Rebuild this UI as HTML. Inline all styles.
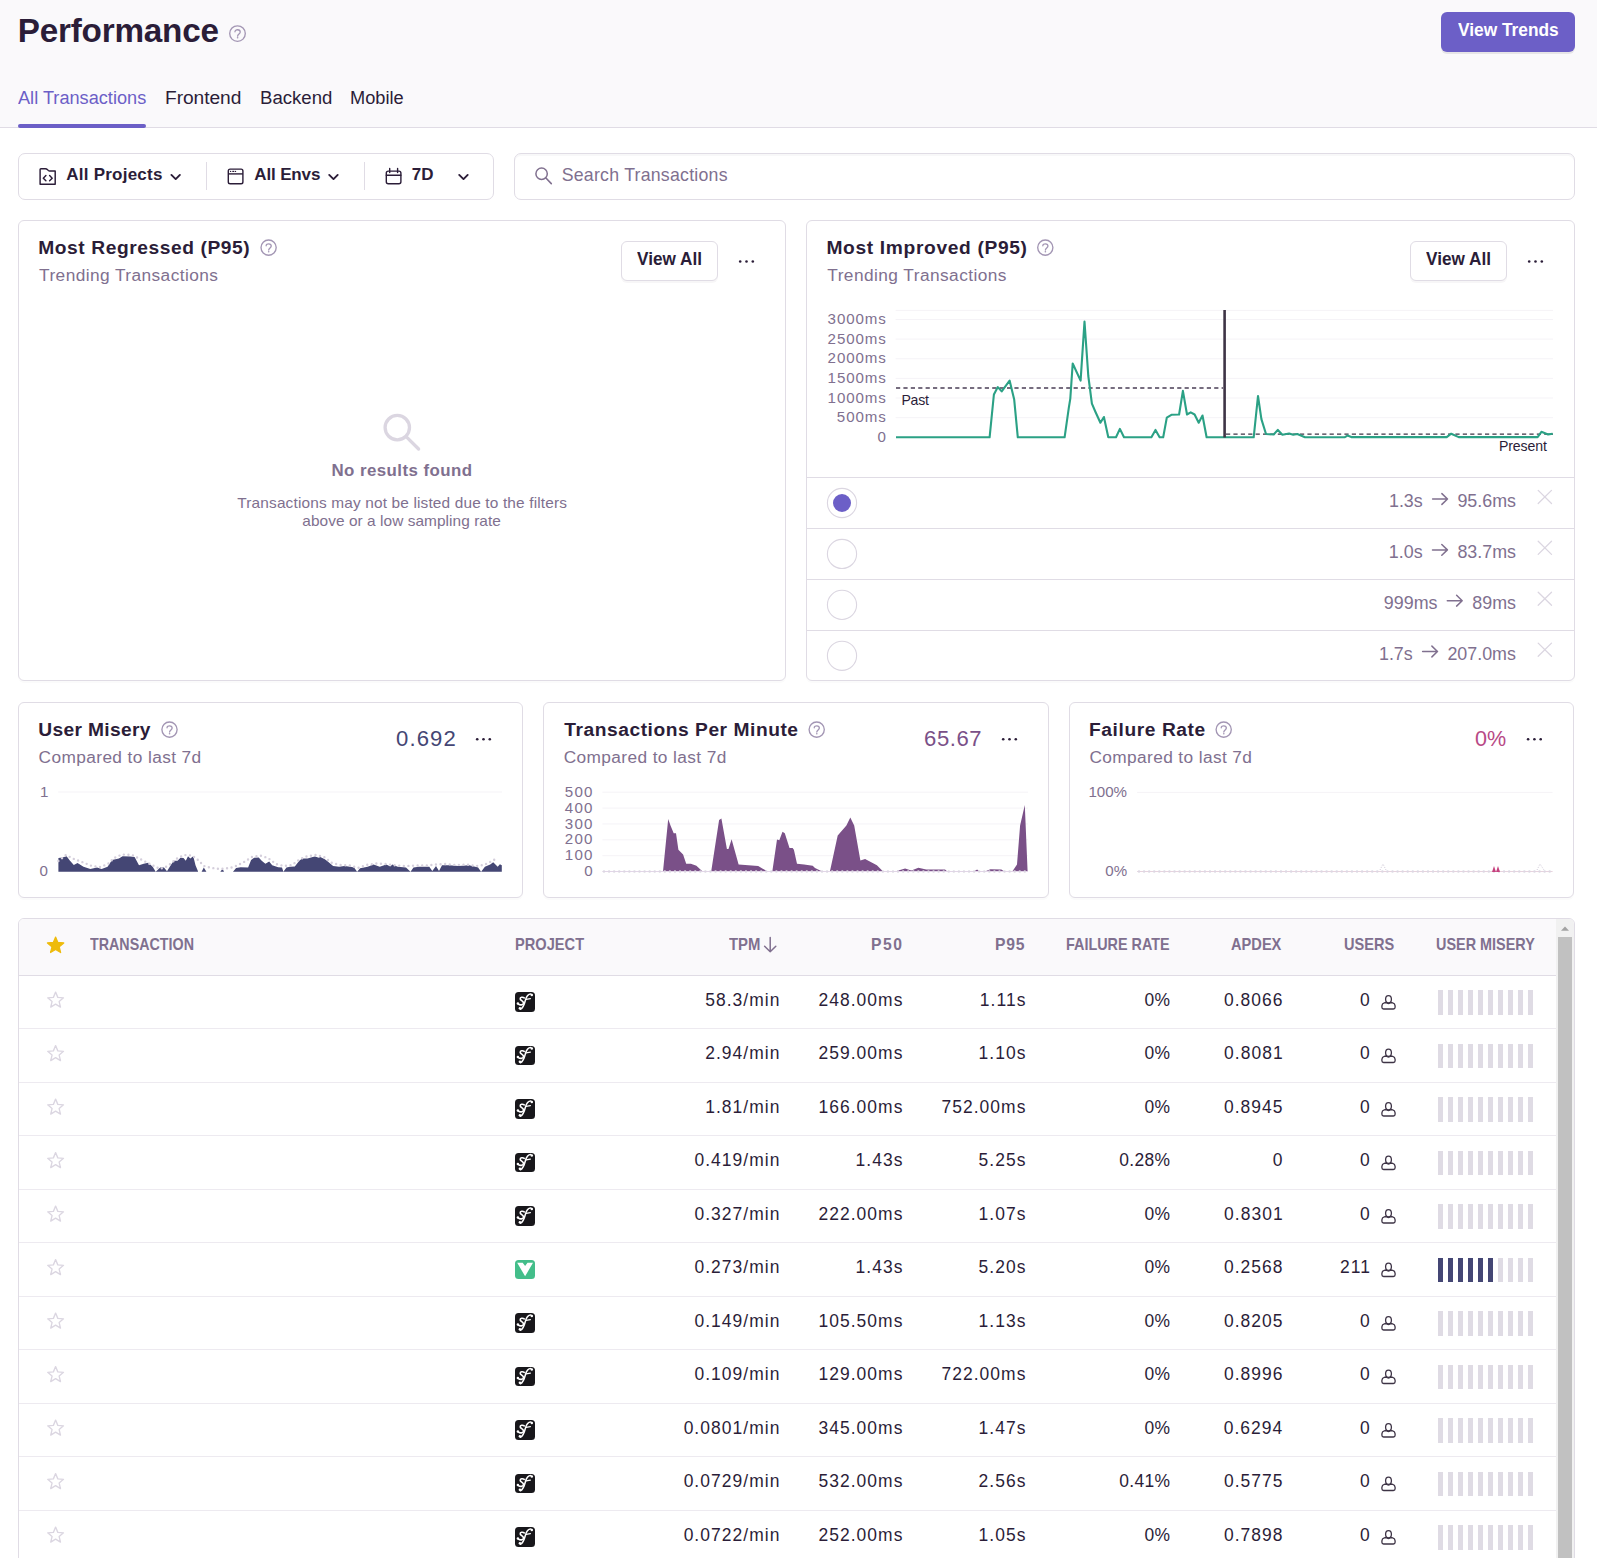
<!DOCTYPE html>
<html><head><meta charset="utf-8"><title>Performance</title>
<style>
html,body{margin:0;padding:0;}
body{background:#fff;font-family:"Liberation Sans",sans-serif;}
.page{position:relative;width:1597px;height:1558px;overflow:hidden;background:#fff;}
.b{position:absolute;}
.t{position:absolute;white-space:nowrap;}
svg{position:absolute;left:0;top:0;}
</style></head><body><div class="page">
<div class="b" style="left:0px;top:0px;width:1597px;height:128px;background:#FAF9FB;border-bottom:1px solid #E0DCE5;box-sizing:border-box;"></div>
<div class="b" style="left:1441px;top:12px;width:134px;height:40px;background:#6C5FC7;border-radius:6px;box-shadow:0 2px 0 rgba(0,0,0,0.08);"></div>
<div class="b" style="left:18px;top:124px;width:128px;height:4px;background:#6C5FC7;border-radius:2px;"></div>
<div class="b" style="left:18px;top:153px;width:476px;height:47px;border:1px solid #E0DCE5;border-radius:7px;box-sizing:border-box;background:#fff;"></div>
<div class="b" style="left:514px;top:153px;width:1061px;height:47px;border:1px solid #E0DCE5;border-radius:7px;box-sizing:border-box;background:#fff;box-shadow:inset 0 2px 0 rgba(43,29,56,0.03);"></div>
<div class="b" style="left:206px;top:162px;width:1px;height:28px;background:#E0DCE5;"></div>
<div class="b" style="left:364px;top:162px;width:1px;height:28px;background:#E0DCE5;"></div>
<div class="b" style="left:18px;top:220px;width:768px;height:461px;border:1px solid #E0DCE5;border-radius:6px;box-sizing:border-box;background:#fff;box-shadow:0 2px 0 rgba(43,29,56,0.02);"></div>
<div class="b" style="left:806px;top:220px;width:769px;height:461px;border:1px solid #E0DCE5;border-radius:6px;box-sizing:border-box;background:#fff;box-shadow:0 2px 0 rgba(43,29,56,0.02);"></div>
<div class="b" style="left:621px;top:241px;width:97px;height:40px;border:1px solid #E0DCE5;border-radius:6px;box-sizing:border-box;background:#fff;box-shadow:0 2px 0 rgba(43,29,56,0.04);"></div>
<div class="b" style="left:1410px;top:241px;width:97px;height:40px;border:1px solid #E0DCE5;border-radius:6px;box-sizing:border-box;background:#fff;box-shadow:0 2px 0 rgba(43,29,56,0.04);"></div>
<div class="b" style="left:807px;top:477px;width:767px;height:1px;background:#E0DCE5;"></div>
<div class="b" style="left:807px;top:528px;width:767px;height:1px;background:#E0DCE5;"></div>
<div class="b" style="left:807px;top:579px;width:767px;height:1px;background:#E0DCE5;"></div>
<div class="b" style="left:807px;top:630px;width:767px;height:1px;background:#E0DCE5;"></div>
<div class="b" style="left:18px;top:702px;width:505px;height:196px;border:1px solid #E0DCE5;border-radius:6px;box-sizing:border-box;background:#fff;box-shadow:0 2px 0 rgba(43,29,56,0.02);"></div>
<div class="b" style="left:543px;top:702px;width:506px;height:196px;border:1px solid #E0DCE5;border-radius:6px;box-sizing:border-box;background:#fff;box-shadow:0 2px 0 rgba(43,29,56,0.02);"></div>
<div class="b" style="left:1069px;top:702px;width:505px;height:196px;border:1px solid #E0DCE5;border-radius:6px;box-sizing:border-box;background:#fff;box-shadow:0 2px 0 rgba(43,29,56,0.02);"></div>
<div class="b" style="left:18px;top:918px;width:1557px;height:682px;border:1px solid #E0DCE5;border-radius:6px;box-sizing:border-box;background:#fff;overflow:hidden;"></div>
<div class="b" style="left:19px;top:919px;width:1537px;height:56px;background:#FAF9FB;border-top-left-radius:5px;"></div>
<div class="b" style="left:19px;top:975px;width:1537px;height:1px;background:#E0DCE5;"></div>
<div class="b" style="left:1556px;top:919px;width:18px;height:639px;background:#F1F1F1;border-top-right-radius:5px;"></div>
<div class="b" style="left:1558px;top:937px;width:14px;height:621px;background:#C1C1C1;"></div>
<div class="b" style="left:515.2px;top:992.0px;width:19.59999999999991px;height:19.600000000000023px;background:#18171B;border-radius:3.5px;"></div>
<div class="b" style="left:1438.0px;top:990.1px;width:5.0px;height:24.799999999999955px;background:#DFDBE4;"></div>
<div class="b" style="left:1448.0px;top:990.1px;width:5.0px;height:24.799999999999955px;background:#DFDBE4;"></div>
<div class="b" style="left:1458.0px;top:990.1px;width:5.0px;height:24.799999999999955px;background:#DFDBE4;"></div>
<div class="b" style="left:1468.0px;top:990.1px;width:5.0px;height:24.799999999999955px;background:#DFDBE4;"></div>
<div class="b" style="left:1478.0px;top:990.1px;width:5.0px;height:24.799999999999955px;background:#DFDBE4;"></div>
<div class="b" style="left:1488.0px;top:990.1px;width:5.0px;height:24.799999999999955px;background:#DFDBE4;"></div>
<div class="b" style="left:1498.0px;top:990.1px;width:5.0px;height:24.799999999999955px;background:#DFDBE4;"></div>
<div class="b" style="left:1508.0px;top:990.1px;width:5.0px;height:24.799999999999955px;background:#DFDBE4;"></div>
<div class="b" style="left:1518.0px;top:990.1px;width:5.0px;height:24.799999999999955px;background:#DFDBE4;"></div>
<div class="b" style="left:1528.0px;top:990.1px;width:5.0px;height:24.799999999999955px;background:#DFDBE4;"></div>
<div class="b" style="left:19px;top:1028px;width:1537px;height:1px;background:#EDEAF0;"></div>
<div class="b" style="left:515.2px;top:1045.5px;width:19.59999999999991px;height:19.600000000000136px;background:#18171B;border-radius:3.5px;"></div>
<div class="b" style="left:1438.0px;top:1043.6000000000001px;width:5.0px;height:24.799999999999955px;background:#DFDBE4;"></div>
<div class="b" style="left:1448.0px;top:1043.6000000000001px;width:5.0px;height:24.799999999999955px;background:#DFDBE4;"></div>
<div class="b" style="left:1458.0px;top:1043.6000000000001px;width:5.0px;height:24.799999999999955px;background:#DFDBE4;"></div>
<div class="b" style="left:1468.0px;top:1043.6000000000001px;width:5.0px;height:24.799999999999955px;background:#DFDBE4;"></div>
<div class="b" style="left:1478.0px;top:1043.6000000000001px;width:5.0px;height:24.799999999999955px;background:#DFDBE4;"></div>
<div class="b" style="left:1488.0px;top:1043.6000000000001px;width:5.0px;height:24.799999999999955px;background:#DFDBE4;"></div>
<div class="b" style="left:1498.0px;top:1043.6000000000001px;width:5.0px;height:24.799999999999955px;background:#DFDBE4;"></div>
<div class="b" style="left:1508.0px;top:1043.6000000000001px;width:5.0px;height:24.799999999999955px;background:#DFDBE4;"></div>
<div class="b" style="left:1518.0px;top:1043.6000000000001px;width:5.0px;height:24.799999999999955px;background:#DFDBE4;"></div>
<div class="b" style="left:1528.0px;top:1043.6000000000001px;width:5.0px;height:24.799999999999955px;background:#DFDBE4;"></div>
<div class="b" style="left:19px;top:1082px;width:1537px;height:1px;background:#EDEAF0;"></div>
<div class="b" style="left:515.2px;top:1099.0px;width:19.59999999999991px;height:19.600000000000136px;background:#18171B;border-radius:3.5px;"></div>
<div class="b" style="left:1438.0px;top:1097.1000000000001px;width:5.0px;height:24.799999999999955px;background:#DFDBE4;"></div>
<div class="b" style="left:1448.0px;top:1097.1000000000001px;width:5.0px;height:24.799999999999955px;background:#DFDBE4;"></div>
<div class="b" style="left:1458.0px;top:1097.1000000000001px;width:5.0px;height:24.799999999999955px;background:#DFDBE4;"></div>
<div class="b" style="left:1468.0px;top:1097.1000000000001px;width:5.0px;height:24.799999999999955px;background:#DFDBE4;"></div>
<div class="b" style="left:1478.0px;top:1097.1000000000001px;width:5.0px;height:24.799999999999955px;background:#DFDBE4;"></div>
<div class="b" style="left:1488.0px;top:1097.1000000000001px;width:5.0px;height:24.799999999999955px;background:#DFDBE4;"></div>
<div class="b" style="left:1498.0px;top:1097.1000000000001px;width:5.0px;height:24.799999999999955px;background:#DFDBE4;"></div>
<div class="b" style="left:1508.0px;top:1097.1000000000001px;width:5.0px;height:24.799999999999955px;background:#DFDBE4;"></div>
<div class="b" style="left:1518.0px;top:1097.1000000000001px;width:5.0px;height:24.799999999999955px;background:#DFDBE4;"></div>
<div class="b" style="left:1528.0px;top:1097.1000000000001px;width:5.0px;height:24.799999999999955px;background:#DFDBE4;"></div>
<div class="b" style="left:19px;top:1135px;width:1537px;height:1px;background:#EDEAF0;"></div>
<div class="b" style="left:515.2px;top:1152.5px;width:19.59999999999991px;height:19.600000000000136px;background:#18171B;border-radius:3.5px;"></div>
<div class="b" style="left:1438.0px;top:1150.6000000000001px;width:5.0px;height:24.799999999999955px;background:#DFDBE4;"></div>
<div class="b" style="left:1448.0px;top:1150.6000000000001px;width:5.0px;height:24.799999999999955px;background:#DFDBE4;"></div>
<div class="b" style="left:1458.0px;top:1150.6000000000001px;width:5.0px;height:24.799999999999955px;background:#DFDBE4;"></div>
<div class="b" style="left:1468.0px;top:1150.6000000000001px;width:5.0px;height:24.799999999999955px;background:#DFDBE4;"></div>
<div class="b" style="left:1478.0px;top:1150.6000000000001px;width:5.0px;height:24.799999999999955px;background:#DFDBE4;"></div>
<div class="b" style="left:1488.0px;top:1150.6000000000001px;width:5.0px;height:24.799999999999955px;background:#DFDBE4;"></div>
<div class="b" style="left:1498.0px;top:1150.6000000000001px;width:5.0px;height:24.799999999999955px;background:#DFDBE4;"></div>
<div class="b" style="left:1508.0px;top:1150.6000000000001px;width:5.0px;height:24.799999999999955px;background:#DFDBE4;"></div>
<div class="b" style="left:1518.0px;top:1150.6000000000001px;width:5.0px;height:24.799999999999955px;background:#DFDBE4;"></div>
<div class="b" style="left:1528.0px;top:1150.6000000000001px;width:5.0px;height:24.799999999999955px;background:#DFDBE4;"></div>
<div class="b" style="left:19px;top:1189px;width:1537px;height:1px;background:#EDEAF0;"></div>
<div class="b" style="left:515.2px;top:1206.0px;width:19.59999999999991px;height:19.600000000000136px;background:#18171B;border-radius:3.5px;"></div>
<div class="b" style="left:1438.0px;top:1204.1000000000001px;width:5.0px;height:24.799999999999955px;background:#DFDBE4;"></div>
<div class="b" style="left:1448.0px;top:1204.1000000000001px;width:5.0px;height:24.799999999999955px;background:#DFDBE4;"></div>
<div class="b" style="left:1458.0px;top:1204.1000000000001px;width:5.0px;height:24.799999999999955px;background:#DFDBE4;"></div>
<div class="b" style="left:1468.0px;top:1204.1000000000001px;width:5.0px;height:24.799999999999955px;background:#DFDBE4;"></div>
<div class="b" style="left:1478.0px;top:1204.1000000000001px;width:5.0px;height:24.799999999999955px;background:#DFDBE4;"></div>
<div class="b" style="left:1488.0px;top:1204.1000000000001px;width:5.0px;height:24.799999999999955px;background:#DFDBE4;"></div>
<div class="b" style="left:1498.0px;top:1204.1000000000001px;width:5.0px;height:24.799999999999955px;background:#DFDBE4;"></div>
<div class="b" style="left:1508.0px;top:1204.1000000000001px;width:5.0px;height:24.799999999999955px;background:#DFDBE4;"></div>
<div class="b" style="left:1518.0px;top:1204.1000000000001px;width:5.0px;height:24.799999999999955px;background:#DFDBE4;"></div>
<div class="b" style="left:1528.0px;top:1204.1000000000001px;width:5.0px;height:24.799999999999955px;background:#DFDBE4;"></div>
<div class="b" style="left:19px;top:1242px;width:1537px;height:1px;background:#EDEAF0;"></div>
<div class="b" style="left:515.2px;top:1259.5px;width:19.699999999999932px;height:19.800000000000182px;background:#43BE8A;border-radius:3.5px;"></div>
<div class="b" style="left:1438.0px;top:1257.6000000000001px;width:5.0px;height:24.799999999999955px;background:#444674;"></div>
<div class="b" style="left:1448.0px;top:1257.6000000000001px;width:5.0px;height:24.799999999999955px;background:#444674;"></div>
<div class="b" style="left:1458.0px;top:1257.6000000000001px;width:5.0px;height:24.799999999999955px;background:#444674;"></div>
<div class="b" style="left:1468.0px;top:1257.6000000000001px;width:5.0px;height:24.799999999999955px;background:#444674;"></div>
<div class="b" style="left:1478.0px;top:1257.6000000000001px;width:5.0px;height:24.799999999999955px;background:#444674;"></div>
<div class="b" style="left:1488.0px;top:1257.6000000000001px;width:5.0px;height:24.799999999999955px;background:#444674;"></div>
<div class="b" style="left:1498.0px;top:1257.6000000000001px;width:5.0px;height:24.799999999999955px;background:#DFDBE4;"></div>
<div class="b" style="left:1508.0px;top:1257.6000000000001px;width:5.0px;height:24.799999999999955px;background:#DFDBE4;"></div>
<div class="b" style="left:1518.0px;top:1257.6000000000001px;width:5.0px;height:24.799999999999955px;background:#DFDBE4;"></div>
<div class="b" style="left:1528.0px;top:1257.6000000000001px;width:5.0px;height:24.799999999999955px;background:#DFDBE4;"></div>
<div class="b" style="left:19px;top:1296px;width:1537px;height:1px;background:#EDEAF0;"></div>
<div class="b" style="left:515.2px;top:1313.0px;width:19.59999999999991px;height:19.600000000000136px;background:#18171B;border-radius:3.5px;"></div>
<div class="b" style="left:1438.0px;top:1311.1000000000001px;width:5.0px;height:24.799999999999955px;background:#DFDBE4;"></div>
<div class="b" style="left:1448.0px;top:1311.1000000000001px;width:5.0px;height:24.799999999999955px;background:#DFDBE4;"></div>
<div class="b" style="left:1458.0px;top:1311.1000000000001px;width:5.0px;height:24.799999999999955px;background:#DFDBE4;"></div>
<div class="b" style="left:1468.0px;top:1311.1000000000001px;width:5.0px;height:24.799999999999955px;background:#DFDBE4;"></div>
<div class="b" style="left:1478.0px;top:1311.1000000000001px;width:5.0px;height:24.799999999999955px;background:#DFDBE4;"></div>
<div class="b" style="left:1488.0px;top:1311.1000000000001px;width:5.0px;height:24.799999999999955px;background:#DFDBE4;"></div>
<div class="b" style="left:1498.0px;top:1311.1000000000001px;width:5.0px;height:24.799999999999955px;background:#DFDBE4;"></div>
<div class="b" style="left:1508.0px;top:1311.1000000000001px;width:5.0px;height:24.799999999999955px;background:#DFDBE4;"></div>
<div class="b" style="left:1518.0px;top:1311.1000000000001px;width:5.0px;height:24.799999999999955px;background:#DFDBE4;"></div>
<div class="b" style="left:1528.0px;top:1311.1000000000001px;width:5.0px;height:24.799999999999955px;background:#DFDBE4;"></div>
<div class="b" style="left:19px;top:1349px;width:1537px;height:1px;background:#EDEAF0;"></div>
<div class="b" style="left:515.2px;top:1366.5px;width:19.59999999999991px;height:19.600000000000136px;background:#18171B;border-radius:3.5px;"></div>
<div class="b" style="left:1438.0px;top:1364.6000000000001px;width:5.0px;height:24.799999999999955px;background:#DFDBE4;"></div>
<div class="b" style="left:1448.0px;top:1364.6000000000001px;width:5.0px;height:24.799999999999955px;background:#DFDBE4;"></div>
<div class="b" style="left:1458.0px;top:1364.6000000000001px;width:5.0px;height:24.799999999999955px;background:#DFDBE4;"></div>
<div class="b" style="left:1468.0px;top:1364.6000000000001px;width:5.0px;height:24.799999999999955px;background:#DFDBE4;"></div>
<div class="b" style="left:1478.0px;top:1364.6000000000001px;width:5.0px;height:24.799999999999955px;background:#DFDBE4;"></div>
<div class="b" style="left:1488.0px;top:1364.6000000000001px;width:5.0px;height:24.799999999999955px;background:#DFDBE4;"></div>
<div class="b" style="left:1498.0px;top:1364.6000000000001px;width:5.0px;height:24.799999999999955px;background:#DFDBE4;"></div>
<div class="b" style="left:1508.0px;top:1364.6000000000001px;width:5.0px;height:24.799999999999955px;background:#DFDBE4;"></div>
<div class="b" style="left:1518.0px;top:1364.6000000000001px;width:5.0px;height:24.799999999999955px;background:#DFDBE4;"></div>
<div class="b" style="left:1528.0px;top:1364.6000000000001px;width:5.0px;height:24.799999999999955px;background:#DFDBE4;"></div>
<div class="b" style="left:19px;top:1403px;width:1537px;height:1px;background:#EDEAF0;"></div>
<div class="b" style="left:515.2px;top:1420.0px;width:19.59999999999991px;height:19.600000000000136px;background:#18171B;border-radius:3.5px;"></div>
<div class="b" style="left:1438.0px;top:1418.1000000000001px;width:5.0px;height:24.799999999999955px;background:#DFDBE4;"></div>
<div class="b" style="left:1448.0px;top:1418.1000000000001px;width:5.0px;height:24.799999999999955px;background:#DFDBE4;"></div>
<div class="b" style="left:1458.0px;top:1418.1000000000001px;width:5.0px;height:24.799999999999955px;background:#DFDBE4;"></div>
<div class="b" style="left:1468.0px;top:1418.1000000000001px;width:5.0px;height:24.799999999999955px;background:#DFDBE4;"></div>
<div class="b" style="left:1478.0px;top:1418.1000000000001px;width:5.0px;height:24.799999999999955px;background:#DFDBE4;"></div>
<div class="b" style="left:1488.0px;top:1418.1000000000001px;width:5.0px;height:24.799999999999955px;background:#DFDBE4;"></div>
<div class="b" style="left:1498.0px;top:1418.1000000000001px;width:5.0px;height:24.799999999999955px;background:#DFDBE4;"></div>
<div class="b" style="left:1508.0px;top:1418.1000000000001px;width:5.0px;height:24.799999999999955px;background:#DFDBE4;"></div>
<div class="b" style="left:1518.0px;top:1418.1000000000001px;width:5.0px;height:24.799999999999955px;background:#DFDBE4;"></div>
<div class="b" style="left:1528.0px;top:1418.1000000000001px;width:5.0px;height:24.799999999999955px;background:#DFDBE4;"></div>
<div class="b" style="left:19px;top:1456px;width:1537px;height:1px;background:#EDEAF0;"></div>
<div class="b" style="left:515.2px;top:1473.5px;width:19.59999999999991px;height:19.600000000000136px;background:#18171B;border-radius:3.5px;"></div>
<div class="b" style="left:1438.0px;top:1471.6000000000001px;width:5.0px;height:24.799999999999955px;background:#DFDBE4;"></div>
<div class="b" style="left:1448.0px;top:1471.6000000000001px;width:5.0px;height:24.799999999999955px;background:#DFDBE4;"></div>
<div class="b" style="left:1458.0px;top:1471.6000000000001px;width:5.0px;height:24.799999999999955px;background:#DFDBE4;"></div>
<div class="b" style="left:1468.0px;top:1471.6000000000001px;width:5.0px;height:24.799999999999955px;background:#DFDBE4;"></div>
<div class="b" style="left:1478.0px;top:1471.6000000000001px;width:5.0px;height:24.799999999999955px;background:#DFDBE4;"></div>
<div class="b" style="left:1488.0px;top:1471.6000000000001px;width:5.0px;height:24.799999999999955px;background:#DFDBE4;"></div>
<div class="b" style="left:1498.0px;top:1471.6000000000001px;width:5.0px;height:24.799999999999955px;background:#DFDBE4;"></div>
<div class="b" style="left:1508.0px;top:1471.6000000000001px;width:5.0px;height:24.799999999999955px;background:#DFDBE4;"></div>
<div class="b" style="left:1518.0px;top:1471.6000000000001px;width:5.0px;height:24.799999999999955px;background:#DFDBE4;"></div>
<div class="b" style="left:1528.0px;top:1471.6000000000001px;width:5.0px;height:24.799999999999955px;background:#DFDBE4;"></div>
<div class="b" style="left:19px;top:1510px;width:1537px;height:1px;background:#EDEAF0;"></div>
<div class="b" style="left:515.2px;top:1527.0px;width:19.59999999999991px;height:19.600000000000136px;background:#18171B;border-radius:3.5px;"></div>
<div class="b" style="left:1438.0px;top:1525.1000000000001px;width:5.0px;height:24.799999999999955px;background:#DFDBE4;"></div>
<div class="b" style="left:1448.0px;top:1525.1000000000001px;width:5.0px;height:24.799999999999955px;background:#DFDBE4;"></div>
<div class="b" style="left:1458.0px;top:1525.1000000000001px;width:5.0px;height:24.799999999999955px;background:#DFDBE4;"></div>
<div class="b" style="left:1468.0px;top:1525.1000000000001px;width:5.0px;height:24.799999999999955px;background:#DFDBE4;"></div>
<div class="b" style="left:1478.0px;top:1525.1000000000001px;width:5.0px;height:24.799999999999955px;background:#DFDBE4;"></div>
<div class="b" style="left:1488.0px;top:1525.1000000000001px;width:5.0px;height:24.799999999999955px;background:#DFDBE4;"></div>
<div class="b" style="left:1498.0px;top:1525.1000000000001px;width:5.0px;height:24.799999999999955px;background:#DFDBE4;"></div>
<div class="b" style="left:1508.0px;top:1525.1000000000001px;width:5.0px;height:24.799999999999955px;background:#DFDBE4;"></div>
<div class="b" style="left:1518.0px;top:1525.1000000000001px;width:5.0px;height:24.799999999999955px;background:#DFDBE4;"></div>
<div class="b" style="left:1528.0px;top:1525.1000000000001px;width:5.0px;height:24.799999999999955px;background:#DFDBE4;"></div>
<svg width="1597" height="1558" viewBox="0 0 1597 1558">
<circle cx="237.5" cy="33.6" r="7.8" fill="none" stroke="#A396B4" stroke-width="1.35"/>
<path d="M234.97 31.75 C234.97 29.12 240.23 28.92 240.23 32.04 C240.23 33.80 237.60 34.19 237.60 36.14" fill="none" stroke="#A396B4" stroke-width="1.28" stroke-linecap="round"/>
<circle cx="237.60" cy="37.79" r="0.83" fill="#A396B4"/>
<path d="M40.1 184.2 V169.6 Q40.1 168.8 40.9 168.8 H45.3 Q46.6 168.8 47.6 169.8 L48.4 170.5 Q48.9 170.9 49.6 170.9 H55.2 V184.2 Z" fill="none" stroke="#2B1D38" stroke-width="1.45" stroke-linejoin="round"/>
<path d="M45.9 175.6 L43.3 178.2 L45.9 180.8 M49.6 175.6 L52.2 178.2 L49.6 180.8" fill="none" stroke="#2B1D38" stroke-width="1.45" stroke-linecap="round" stroke-linejoin="round"/>
<path d="M171.4 174.9 L175.70000000000002 179.1 L179.9 174.9" fill="none" stroke="#2B1D38" stroke-width="1.9" stroke-linecap="round" stroke-linejoin="round"/>
<rect x="228.3" y="169.1" width="14.6" height="14.7" rx="1.8" fill="none" stroke="#2B1D38" stroke-width="1.4"/>
<path d="M228.3 173.9 H242.9" stroke="#2B1D38" stroke-width="1.4"/>
<circle cx="230.6" cy="171.4" r="0.7" fill="#2B1D38"/><rect x="232.3" y="170.8" width="2.0" height="1.2" fill="#2B1D38"/><circle cx="235.5" cy="171.4" r="0.7" fill="#2B1D38"/>
<path d="M329.2 174.9 L333.5 179.1 L337.7 174.9" fill="none" stroke="#2B1D38" stroke-width="1.9" stroke-linecap="round" stroke-linejoin="round"/>
<rect x="386.3" y="171.1" width="14.6" height="12.7" rx="2" fill="none" stroke="#2B1D38" stroke-width="1.4"/>
<path d="M386.3 175.3 H400.9 M389.7 168.4 V172.5 M397.6 168.4 V172.5" stroke="#2B1D38" stroke-width="1.4" stroke-linecap="round"/>
<path d="M459.2 174.9 L463.5 179.1 L467.7 174.9" fill="none" stroke="#2B1D38" stroke-width="1.9" stroke-linecap="round" stroke-linejoin="round"/>
<circle cx="541.6" cy="173.7" r="5.7" fill="none" stroke="#80708F" stroke-width="1.5"/><path d="M545.7 177.8 L551.3 183.6" stroke="#80708F" stroke-width="1.6" stroke-linecap="round"/>
<circle cx="268.6" cy="247.6" r="7.6" fill="none" stroke="#A396B4" stroke-width="1.35"/>
<path d="M266.13 245.79 C266.13 243.23 271.26 243.04 271.26 246.08 C271.26 247.79 268.70 248.17 268.70 250.07" fill="none" stroke="#A396B4" stroke-width="1.28" stroke-linecap="round"/>
<circle cx="268.70" cy="251.69" r="0.81" fill="#A396B4"/>
<circle cx="1045.3" cy="247.6" r="7.6" fill="none" stroke="#A396B4" stroke-width="1.35"/>
<path d="M1042.83 245.79 C1042.83 243.23 1047.96 243.04 1047.96 246.08 C1047.96 247.79 1045.39 248.17 1045.39 250.07" fill="none" stroke="#A396B4" stroke-width="1.28" stroke-linecap="round"/>
<circle cx="1045.39" cy="251.69" r="0.81" fill="#A396B4"/>
<circle cx="740.20" cy="261.5" r="1.3" fill="#2B1D38"/>
<circle cx="746.50" cy="261.5" r="1.3" fill="#2B1D38"/>
<circle cx="752.80" cy="261.5" r="1.3" fill="#2B1D38"/>
<circle cx="1529.20" cy="261.5" r="1.3" fill="#2B1D38"/>
<circle cx="1535.50" cy="261.5" r="1.3" fill="#2B1D38"/>
<circle cx="1541.80" cy="261.5" r="1.3" fill="#2B1D38"/>
<circle cx="397.3" cy="427.6" r="12.2" fill="none" stroke="#DBD6E1" stroke-width="3.3"/><path d="M406.4 436.8 L418.6 449.0" stroke="#DBD6E1" stroke-width="3.3" stroke-linecap="round"/>
<path d="M895.6 417.66 H1553" stroke="#F5F3F7" stroke-width="1"/>
<path d="M895.6 398.02 H1553" stroke="#F5F3F7" stroke-width="1"/>
<path d="M895.6 378.38 H1553" stroke="#F5F3F7" stroke-width="1"/>
<path d="M895.6 358.74 H1553" stroke="#F5F3F7" stroke-width="1"/>
<path d="M895.6 339.10 H1553" stroke="#F5F3F7" stroke-width="1"/>
<path d="M895.6 319.46 H1553" stroke="#F5F3F7" stroke-width="1"/>
<path d="M895.6 310.4 H1553" stroke="#F5F3F7" stroke-width="1"/>
<path d="M896 388 H1223" stroke="#4A3E56" stroke-width="1.4" stroke-dasharray="4.2 3.2" fill="none"/>
<path d="M1226 434.2 H1553" stroke="#3E3446" stroke-width="1.3" stroke-dasharray="4.2 3.2" fill="none"/>
<path d="M896.0 437.3 L989.6 437.3 L993.9 394.5 L997.8 387.1 L1001.7 391.4 L1009.6 380.6 L1014.2 399.6 L1017.8 437.3 L1064.6 437.3 L1068.8 407.8 L1070.3 398.6 L1072.7 363.5 L1080.6 380.6 L1084.5 321.6 L1088.3 376.0 L1091.9 403.7 L1095.5 412.0 L1100.4 422.7 L1103.9 417.0 L1108.3 437.3 L1116.0 437.3 L1119.9 428.9 L1124.0 437.3 L1151.4 437.3 L1155.5 429.9 L1159.6 437.3 L1163.2 437.3 L1166.8 417.6 L1171.4 414.8 L1179.1 414.5 L1182.9 390.9 L1187.0 414.5 L1190.7 412.4 L1194.6 414.5 L1198.7 422.7 L1202.5 415.5 L1206.6 437.3 L1253.7 437.3 L1258.0 396.0 L1261.4 419.1 L1266.0 434.0 L1273.7 434.5 L1277.8 429.9 L1282.4 434.7 L1289.1 433.5 L1293.2 434.7 L1297.3 434.0 L1305.0 437.3 L1344.5 437.3 L1347.5 435.6 L1351.3 437.1 L1446.7 437.1 L1451.2 433.7 L1458.7 437.1 L1537.6 437.1 L1541.4 431.8 L1548.1 434.4 L1552.7 433.7" fill="none" stroke="#2BA185" stroke-width="2.1" stroke-linejoin="round"/>
<path d="M1224.6 310 V437.5" stroke="#3E3446" stroke-width="2.6"/>
<circle cx="842" cy="503.00" r="14.6" fill="#fff" stroke="#DBD6E1" stroke-width="1.1"/>
<circle cx="842" cy="503.00" r="9" fill="#6C5FC7"/>
<path d="M1432.6 499.0 H1447.5 M1441.9 493.6 L1447.5 499.0 L1441.9 504.4" fill="none" stroke="#80708F" stroke-width="1.5" stroke-linecap="round" stroke-linejoin="round"/>
<path d="M1538.2 490.4 L1551.5 503.5 M1551.5 490.4 L1538.2 503.5" stroke="#DBD6E1" stroke-width="1.3" stroke-linecap="round"/>
<circle cx="842" cy="553.93" r="14.6" fill="#fff" stroke="#DBD6E1" stroke-width="1.1"/>
<path d="M1432.5 549.9 H1447.4 M1441.8 544.5 L1447.4 549.9 L1441.8 555.2" fill="none" stroke="#80708F" stroke-width="1.5" stroke-linecap="round" stroke-linejoin="round"/>
<path d="M1538.2 541.3 L1551.5 554.4 M1551.5 541.3 L1538.2 554.4" stroke="#DBD6E1" stroke-width="1.3" stroke-linecap="round"/>
<circle cx="842" cy="604.86" r="14.6" fill="#fff" stroke="#DBD6E1" stroke-width="1.1"/>
<path d="M1447.3 600.7 H1462.2 M1456.6 595.3 L1462.2 600.7 L1456.6 606.1" fill="none" stroke="#80708F" stroke-width="1.5" stroke-linecap="round" stroke-linejoin="round"/>
<path d="M1538.2 592.2 L1551.5 605.3 M1551.5 592.2 L1538.2 605.3" stroke="#DBD6E1" stroke-width="1.3" stroke-linecap="round"/>
<circle cx="842" cy="655.79" r="14.6" fill="#fff" stroke="#DBD6E1" stroke-width="1.1"/>
<path d="M1422.6 651.5 H1437.5 M1431.9 646.1 L1437.5 651.5 L1431.9 656.9" fill="none" stroke="#80708F" stroke-width="1.5" stroke-linecap="round" stroke-linejoin="round"/>
<path d="M1538.2 643.1 L1551.5 656.2 M1551.5 643.1 L1538.2 656.2" stroke="#DBD6E1" stroke-width="1.3" stroke-linecap="round"/>
<circle cx="169.5" cy="729.6" r="7.6" fill="none" stroke="#A396B4" stroke-width="1.35"/>
<path d="M167.03 727.80 C167.03 725.23 172.16 725.04 172.16 728.08 C172.16 729.79 169.59 730.17 169.59 732.07" fill="none" stroke="#A396B4" stroke-width="1.28" stroke-linecap="round"/>
<circle cx="169.59" cy="733.69" r="0.81" fill="#A396B4"/>
<circle cx="477.20" cy="739.3" r="1.3" fill="#2B1D38"/>
<circle cx="483.50" cy="739.3" r="1.3" fill="#2B1D38"/>
<circle cx="489.80" cy="739.3" r="1.3" fill="#2B1D38"/>
<circle cx="816.7" cy="729.6" r="7.6" fill="none" stroke="#A396B4" stroke-width="1.35"/>
<path d="M814.23 727.80 C814.23 725.23 819.36 725.04 819.36 728.08 C819.36 729.79 816.80 730.17 816.80 732.07" fill="none" stroke="#A396B4" stroke-width="1.28" stroke-linecap="round"/>
<circle cx="816.80" cy="733.69" r="0.81" fill="#A396B4"/>
<circle cx="1003.20" cy="739.3" r="1.3" fill="#2B1D38"/>
<circle cx="1009.50" cy="739.3" r="1.3" fill="#2B1D38"/>
<circle cx="1015.80" cy="739.3" r="1.3" fill="#2B1D38"/>
<circle cx="1223.7" cy="729.6" r="7.6" fill="none" stroke="#A396B4" stroke-width="1.35"/>
<path d="M1221.23 727.80 C1221.23 725.23 1226.36 725.04 1226.36 728.08 C1226.36 729.79 1223.80 730.17 1223.80 732.07" fill="none" stroke="#A396B4" stroke-width="1.28" stroke-linecap="round"/>
<circle cx="1223.80" cy="733.69" r="0.81" fill="#A396B4"/>
<circle cx="1528.10" cy="739.3" r="1.3" fill="#2B1D38"/>
<circle cx="1534.40" cy="739.3" r="1.3" fill="#2B1D38"/>
<circle cx="1540.70" cy="739.3" r="1.3" fill="#2B1D38"/>
<path d="M58.2 792 H502" stroke="#F5F3F7" stroke-width="1"/>
<path d="M58.4 871.7 L58.4 858.0 L62.5 857.4 L66.6 856.3 L70.0 860.8 L73.8 864.9 L77.5 863.0 L83.5 866.8 L90.3 869.0 L97.0 867.5 L101.6 869.0 L107.6 866.8 L112.0 860.0 L118.9 858.5 L122.6 856.3 L130.0 856.6 L134.6 857.0 L139.0 865.3 L143.7 863.8 L148.2 862.7 L152.7 866.8 L155.7 871.7 L160.2 867.5 L164.0 867.5 L167.0 871.3 L170.7 865.3 L173.8 860.8 L177.5 860.8 L180.5 857.8 L183.5 858.1 L185.8 860.8 L188.0 856.3 L190.3 858.5 L193.3 856.3 L195.5 865.3 L198.2 871.7 L201.6 871.7 L203.8 867.5 L206.4 871.7 L220.3 871.7 L222.6 868.7 L224.0 871.7 L233.0 871.7 L236.1 867.9 L240.6 867.2 L248.1 867.5 L251.1 860.0 L254.1 857.8 L258.7 857.4 L261.7 860.8 L265.4 863.8 L269.2 861.5 L272.2 865.3 L278.2 867.2 L282.0 867.5 L283.4 871.7 L286.5 867.5 L290.0 866.8 L294.8 866.4 L299.3 860.8 L302.3 858.5 L307.5 858.5 L312.8 857.0 L315.0 856.6 L318.8 857.8 L320.3 857.0 L324.8 859.3 L327.8 861.5 L333.1 866.0 L339.1 866.8 L344.4 866.0 L350.4 866.8 L354.1 867.5 L357.1 871.7 L360.1 868.3 L367.6 866.8 L373.6 864.5 L379.7 866.8 L386.4 864.5 L390.2 866.4 L392.4 864.5 L397.7 866.8 L406.0 867.5 L410.5 871.7 L413.5 867.5 L418.8 866.8 L424.0 866.8 L429.3 866.8 L432.3 871.0 L436.0 866.0 L439.0 871.0 L442.0 865.3 L448.8 865.3 L458.6 866.0 L469.1 865.3 L478.1 867.5 L481.1 871.7 L484.9 866.8 L490.2 864.5 L493.2 862.3 L497.7 866.8 L499.9 864.2 L501.8 865.3 L501.8 871.7 Z" fill="#444674"/>
<path d="M58.4 861.0 L66.0 855.0 L74.0 859.0 L82.0 862.0 L92.0 866.0 L100.0 867.0 L108.0 864.0 L114.0 858.0 L122.0 854.5 L132.0 855.0 L140.0 859.0 L150.0 864.0 L160.0 869.0 L168.0 866.0 L176.0 859.0 L184.0 855.0 L192.0 855.5 L198.0 860.0 L204.0 866.0 L212.0 868.0 L220.0 869.0 L230.0 868.0 L236.0 866.0 L244.0 862.0 L252.0 857.0 L260.0 855.5 L268.0 858.0 L276.0 864.0 L284.0 866.0 L292.0 865.0 L300.0 859.0 L308.0 856.0 L316.0 855.0 L324.0 857.0 L332.0 863.0 L340.0 865.0 L350.0 865.5 L358.0 868.0 L366.0 865.0 L376.0 863.5 L386.0 864.0 L396.0 865.5 L406.0 866.0 L416.0 865.5 L426.0 865.5 L436.0 864.5 L446.0 864.0 L456.0 865.0 L466.0 864.5 L476.0 866.0 L484.0 865.0 L492.0 861.0 L497.0 858.0" fill="none" stroke="#D5CFDC" stroke-width="2.4" stroke-dasharray="0 4.6" stroke-linecap="round"/>
<path d="M602.4 855.72 H1028" stroke="#F5F3F7" stroke-width="1"/>
<path d="M602.4 839.84 H1028" stroke="#F5F3F7" stroke-width="1"/>
<path d="M602.4 823.96 H1028" stroke="#F5F3F7" stroke-width="1"/>
<path d="M602.4 808.08 H1028" stroke="#F5F3F7" stroke-width="1"/>
<path d="M602.4 792.20 H1028" stroke="#F5F3F7" stroke-width="1"/>
<path d="M602.4 871.6 L663.0 871.6 L668.2 819.1 L670.5 825.4 L673.7 833.2 L676.0 833.2 L678.4 849.7 L683.1 854.4 L686.2 863.8 L690.9 863.8 L696.4 865.8 L702.6 871.6 L711.2 871.6 L719.1 819.9 L721.4 818.4 L726.9 848.9 L728.5 848.9 L731.6 839.2 L738.6 864.5 L758.2 866.1 L767.6 871.6 L772.3 871.6 L777.0 839.5 L779.3 840.3 L782.5 831.7 L784.8 833.2 L789.5 848.1 L792.6 848.1 L793.9 849.7 L797.0 863.8 L804.1 864.5 L812.7 865.8 L815.0 868.0 L822.1 871.6 L829.9 871.6 L837.7 835.6 L846.4 825.4 L850.3 817.6 L854.2 825.4 L860.4 860.6 L865.1 859.1 L876.9 865.3 L883.1 871.6 L894.9 871.6 L905.1 868.4 L911.3 870.5 L918.4 867.7 L926.2 869.5 L945.0 869.5 L947.3 871.6 L973.9 871.6 L977.1 869.5 L979.4 871.6 L984.9 871.6 L990.4 869.2 L1001.3 869.5 L1004.5 871.6 L1012.3 871.6 L1017.0 864.5 L1020.1 825.4 L1024.8 805.0 L1027.6 871.6 Z" fill="#7A5088"/>
<path d="M602.4 871.5 H1028" stroke="#E3D5E8" stroke-width="1"/>
<path d="M604 871.5 H1028" stroke="#DDD8E3" stroke-width="2.5" stroke-dasharray="0 5.07" stroke-linecap="round"/>
<path d="M1137.1 792.4 H1552.6" stroke="#F5F3F7" stroke-width="1"/>
<path d="M1137.1 871.5 H1552.6" stroke="#E8D3DE" stroke-width="1"/>
<path d="M1139 871.5 H1552.6" stroke="#DDD8E3" stroke-width="2.5" stroke-dasharray="0 5.07" stroke-linecap="round"/>
<path d="M1492 872 L1494 866 L1496 872 L1498 866 L1500 872 Z" fill="#C6417E"/>
<path d="M1380 870 L1383 864 L1386 870" fill="none" stroke="#D0C8D8" stroke-width="1" stroke-dasharray="1 1.5"/>
<path d="M1537 870 L1540 864 L1544 870" fill="none" stroke="#D0C8D8" stroke-width="1" stroke-dasharray="1 1.5"/>
<path d="M1561 930.8 L1569 930.8 L1565 926.6 Z" fill="#A3A3A3"/>
<path d="M770.2 937.5 V951.8 M764.6 946.2 L770.2 951.8 L775.8 946.2" fill="none" stroke="#80708F" stroke-width="1.5" stroke-linecap="round" stroke-linejoin="round"/>
<path d="M55.60 937.00 L57.87 942.47 L63.78 942.94 L59.28 946.80 L60.65 952.56 L55.60 949.47 L50.55 952.56 L51.92 946.80 L47.42 942.94 L53.33 942.47 Z" fill="#EEBB0C" stroke="#EEBB0C" stroke-width="1.2" stroke-linejoin="round"/>
<path d="M55.60 992.10 L57.80 997.38 L63.49 997.84 L59.15 1001.55 L60.48 1007.11 L55.60 1004.13 L50.72 1007.11 L52.05 1001.55 L47.71 997.84 L53.40 997.38 Z" fill="none" stroke="#DBD6E1" stroke-width="1.35" stroke-linejoin="round"/>
<g transform="translate(515.20 992.00)" fill="none" stroke="#fff" stroke-linecap="round"><path d="M5.2 17.2 C7.8 16.2 9.2 12.2 10.2 8.2 C11.2 4.2 12.8 1.9 15.6 1.9" stroke-width="1.5"/><path d="M10.9 7.3 L15.2 6.7" stroke-width="1.2"/><path d="M9.0 5.9 C7.6 4.7 4.9 5.1 5.0 6.9 C5.1 8.6 8.5 9.0 8.3 11.2 C8.1 13.1 4.8 13.4 3.3 12.1" stroke-width="1.6"/></g>
<circle cx="531.80" cy="994.90" r="1.25" fill="#fff"/><circle cx="519.90" cy="1008.30" r="1.25" fill="#fff"/><circle cx="517.90" cy="1003.50" r="1.25" fill="#fff"/>
<ellipse cx="1388.5" cy="999.20" rx="2.9" ry="3.6" fill="none" stroke="#3E3446" stroke-width="1.3"/>
<path d="M1386.0 1002.50 L1384.3 1002.90 Q1382.0 1003.50 1381.9 1005.90 V1007.30 Q1381.9 1009.00 1383.6 1009.00 H1393.4 Q1395.1 1009.00 1395.1 1007.30 V1005.90 Q1395.0 1003.50 1392.7 1002.90 L1391.0 1002.50 Q1388.5 1004.50 1386.0 1002.50 Z" fill="none" stroke="#3E3446" stroke-width="1.3" stroke-linejoin="round"/>
<path d="M55.60 1045.60 L57.80 1050.88 L63.49 1051.34 L59.15 1055.05 L60.48 1060.61 L55.60 1057.63 L50.72 1060.61 L52.05 1055.05 L47.71 1051.34 L53.40 1050.88 Z" fill="none" stroke="#DBD6E1" stroke-width="1.35" stroke-linejoin="round"/>
<g transform="translate(515.20 1045.50)" fill="none" stroke="#fff" stroke-linecap="round"><path d="M5.2 17.2 C7.8 16.2 9.2 12.2 10.2 8.2 C11.2 4.2 12.8 1.9 15.6 1.9" stroke-width="1.5"/><path d="M10.9 7.3 L15.2 6.7" stroke-width="1.2"/><path d="M9.0 5.9 C7.6 4.7 4.9 5.1 5.0 6.9 C5.1 8.6 8.5 9.0 8.3 11.2 C8.1 13.1 4.8 13.4 3.3 12.1" stroke-width="1.6"/></g>
<circle cx="531.80" cy="1048.40" r="1.25" fill="#fff"/><circle cx="519.90" cy="1061.80" r="1.25" fill="#fff"/><circle cx="517.90" cy="1057.00" r="1.25" fill="#fff"/>
<ellipse cx="1388.5" cy="1052.70" rx="2.9" ry="3.6" fill="none" stroke="#3E3446" stroke-width="1.3"/>
<path d="M1386.0 1056.00 L1384.3 1056.40 Q1382.0 1057.00 1381.9 1059.40 V1060.80 Q1381.9 1062.50 1383.6 1062.50 H1393.4 Q1395.1 1062.50 1395.1 1060.80 V1059.40 Q1395.0 1057.00 1392.7 1056.40 L1391.0 1056.00 Q1388.5 1058.00 1386.0 1056.00 Z" fill="none" stroke="#3E3446" stroke-width="1.3" stroke-linejoin="round"/>
<path d="M55.60 1099.10 L57.80 1104.38 L63.49 1104.84 L59.15 1108.55 L60.48 1114.11 L55.60 1111.13 L50.72 1114.11 L52.05 1108.55 L47.71 1104.84 L53.40 1104.38 Z" fill="none" stroke="#DBD6E1" stroke-width="1.35" stroke-linejoin="round"/>
<g transform="translate(515.20 1099.00)" fill="none" stroke="#fff" stroke-linecap="round"><path d="M5.2 17.2 C7.8 16.2 9.2 12.2 10.2 8.2 C11.2 4.2 12.8 1.9 15.6 1.9" stroke-width="1.5"/><path d="M10.9 7.3 L15.2 6.7" stroke-width="1.2"/><path d="M9.0 5.9 C7.6 4.7 4.9 5.1 5.0 6.9 C5.1 8.6 8.5 9.0 8.3 11.2 C8.1 13.1 4.8 13.4 3.3 12.1" stroke-width="1.6"/></g>
<circle cx="531.80" cy="1101.90" r="1.25" fill="#fff"/><circle cx="519.90" cy="1115.30" r="1.25" fill="#fff"/><circle cx="517.90" cy="1110.50" r="1.25" fill="#fff"/>
<ellipse cx="1388.5" cy="1106.20" rx="2.9" ry="3.6" fill="none" stroke="#3E3446" stroke-width="1.3"/>
<path d="M1386.0 1109.50 L1384.3 1109.90 Q1382.0 1110.50 1381.9 1112.90 V1114.30 Q1381.9 1116.00 1383.6 1116.00 H1393.4 Q1395.1 1116.00 1395.1 1114.30 V1112.90 Q1395.0 1110.50 1392.7 1109.90 L1391.0 1109.50 Q1388.5 1111.50 1386.0 1109.50 Z" fill="none" stroke="#3E3446" stroke-width="1.3" stroke-linejoin="round"/>
<path d="M55.60 1152.60 L57.80 1157.88 L63.49 1158.34 L59.15 1162.05 L60.48 1167.61 L55.60 1164.63 L50.72 1167.61 L52.05 1162.05 L47.71 1158.34 L53.40 1157.88 Z" fill="none" stroke="#DBD6E1" stroke-width="1.35" stroke-linejoin="round"/>
<g transform="translate(515.20 1152.50)" fill="none" stroke="#fff" stroke-linecap="round"><path d="M5.2 17.2 C7.8 16.2 9.2 12.2 10.2 8.2 C11.2 4.2 12.8 1.9 15.6 1.9" stroke-width="1.5"/><path d="M10.9 7.3 L15.2 6.7" stroke-width="1.2"/><path d="M9.0 5.9 C7.6 4.7 4.9 5.1 5.0 6.9 C5.1 8.6 8.5 9.0 8.3 11.2 C8.1 13.1 4.8 13.4 3.3 12.1" stroke-width="1.6"/></g>
<circle cx="531.80" cy="1155.40" r="1.25" fill="#fff"/><circle cx="519.90" cy="1168.80" r="1.25" fill="#fff"/><circle cx="517.90" cy="1164.00" r="1.25" fill="#fff"/>
<ellipse cx="1388.5" cy="1159.70" rx="2.9" ry="3.6" fill="none" stroke="#3E3446" stroke-width="1.3"/>
<path d="M1386.0 1163.00 L1384.3 1163.40 Q1382.0 1164.00 1381.9 1166.40 V1167.80 Q1381.9 1169.50 1383.6 1169.50 H1393.4 Q1395.1 1169.50 1395.1 1167.80 V1166.40 Q1395.0 1164.00 1392.7 1163.40 L1391.0 1163.00 Q1388.5 1165.00 1386.0 1163.00 Z" fill="none" stroke="#3E3446" stroke-width="1.3" stroke-linejoin="round"/>
<path d="M55.60 1206.10 L57.80 1211.38 L63.49 1211.84 L59.15 1215.55 L60.48 1221.11 L55.60 1218.13 L50.72 1221.11 L52.05 1215.55 L47.71 1211.84 L53.40 1211.38 Z" fill="none" stroke="#DBD6E1" stroke-width="1.35" stroke-linejoin="round"/>
<g transform="translate(515.20 1206.00)" fill="none" stroke="#fff" stroke-linecap="round"><path d="M5.2 17.2 C7.8 16.2 9.2 12.2 10.2 8.2 C11.2 4.2 12.8 1.9 15.6 1.9" stroke-width="1.5"/><path d="M10.9 7.3 L15.2 6.7" stroke-width="1.2"/><path d="M9.0 5.9 C7.6 4.7 4.9 5.1 5.0 6.9 C5.1 8.6 8.5 9.0 8.3 11.2 C8.1 13.1 4.8 13.4 3.3 12.1" stroke-width="1.6"/></g>
<circle cx="531.80" cy="1208.90" r="1.25" fill="#fff"/><circle cx="519.90" cy="1222.30" r="1.25" fill="#fff"/><circle cx="517.90" cy="1217.50" r="1.25" fill="#fff"/>
<ellipse cx="1388.5" cy="1213.20" rx="2.9" ry="3.6" fill="none" stroke="#3E3446" stroke-width="1.3"/>
<path d="M1386.0 1216.50 L1384.3 1216.90 Q1382.0 1217.50 1381.9 1219.90 V1221.30 Q1381.9 1223.00 1383.6 1223.00 H1393.4 Q1395.1 1223.00 1395.1 1221.30 V1219.90 Q1395.0 1217.50 1392.7 1216.90 L1391.0 1216.50 Q1388.5 1218.50 1386.0 1216.50 Z" fill="none" stroke="#3E3446" stroke-width="1.3" stroke-linejoin="round"/>
<path d="M55.60 1259.60 L57.80 1264.88 L63.49 1265.34 L59.15 1269.05 L60.48 1274.61 L55.60 1271.63 L50.72 1274.61 L52.05 1269.05 L47.71 1265.34 L53.40 1264.88 Z" fill="none" stroke="#DBD6E1" stroke-width="1.35" stroke-linejoin="round"/>
<path d="M517.2 1262.8 L522.7 1262.8 L525.1 1266.1 L527.5 1262.8 L533.0 1262.8 L525.1 1276.3 Z" fill="#fff"/>
<ellipse cx="1388.5" cy="1266.70" rx="2.9" ry="3.6" fill="none" stroke="#3E3446" stroke-width="1.3"/>
<path d="M1386.0 1270.00 L1384.3 1270.40 Q1382.0 1271.00 1381.9 1273.40 V1274.80 Q1381.9 1276.50 1383.6 1276.50 H1393.4 Q1395.1 1276.50 1395.1 1274.80 V1273.40 Q1395.0 1271.00 1392.7 1270.40 L1391.0 1270.00 Q1388.5 1272.00 1386.0 1270.00 Z" fill="none" stroke="#3E3446" stroke-width="1.3" stroke-linejoin="round"/>
<path d="M55.60 1313.10 L57.80 1318.38 L63.49 1318.84 L59.15 1322.55 L60.48 1328.11 L55.60 1325.13 L50.72 1328.11 L52.05 1322.55 L47.71 1318.84 L53.40 1318.38 Z" fill="none" stroke="#DBD6E1" stroke-width="1.35" stroke-linejoin="round"/>
<g transform="translate(515.20 1313.00)" fill="none" stroke="#fff" stroke-linecap="round"><path d="M5.2 17.2 C7.8 16.2 9.2 12.2 10.2 8.2 C11.2 4.2 12.8 1.9 15.6 1.9" stroke-width="1.5"/><path d="M10.9 7.3 L15.2 6.7" stroke-width="1.2"/><path d="M9.0 5.9 C7.6 4.7 4.9 5.1 5.0 6.9 C5.1 8.6 8.5 9.0 8.3 11.2 C8.1 13.1 4.8 13.4 3.3 12.1" stroke-width="1.6"/></g>
<circle cx="531.80" cy="1315.90" r="1.25" fill="#fff"/><circle cx="519.90" cy="1329.30" r="1.25" fill="#fff"/><circle cx="517.90" cy="1324.50" r="1.25" fill="#fff"/>
<ellipse cx="1388.5" cy="1320.20" rx="2.9" ry="3.6" fill="none" stroke="#3E3446" stroke-width="1.3"/>
<path d="M1386.0 1323.50 L1384.3 1323.90 Q1382.0 1324.50 1381.9 1326.90 V1328.30 Q1381.9 1330.00 1383.6 1330.00 H1393.4 Q1395.1 1330.00 1395.1 1328.30 V1326.90 Q1395.0 1324.50 1392.7 1323.90 L1391.0 1323.50 Q1388.5 1325.50 1386.0 1323.50 Z" fill="none" stroke="#3E3446" stroke-width="1.3" stroke-linejoin="round"/>
<path d="M55.60 1366.60 L57.80 1371.88 L63.49 1372.34 L59.15 1376.05 L60.48 1381.61 L55.60 1378.63 L50.72 1381.61 L52.05 1376.05 L47.71 1372.34 L53.40 1371.88 Z" fill="none" stroke="#DBD6E1" stroke-width="1.35" stroke-linejoin="round"/>
<g transform="translate(515.20 1366.50)" fill="none" stroke="#fff" stroke-linecap="round"><path d="M5.2 17.2 C7.8 16.2 9.2 12.2 10.2 8.2 C11.2 4.2 12.8 1.9 15.6 1.9" stroke-width="1.5"/><path d="M10.9 7.3 L15.2 6.7" stroke-width="1.2"/><path d="M9.0 5.9 C7.6 4.7 4.9 5.1 5.0 6.9 C5.1 8.6 8.5 9.0 8.3 11.2 C8.1 13.1 4.8 13.4 3.3 12.1" stroke-width="1.6"/></g>
<circle cx="531.80" cy="1369.40" r="1.25" fill="#fff"/><circle cx="519.90" cy="1382.80" r="1.25" fill="#fff"/><circle cx="517.90" cy="1378.00" r="1.25" fill="#fff"/>
<ellipse cx="1388.5" cy="1373.70" rx="2.9" ry="3.6" fill="none" stroke="#3E3446" stroke-width="1.3"/>
<path d="M1386.0 1377.00 L1384.3 1377.40 Q1382.0 1378.00 1381.9 1380.40 V1381.80 Q1381.9 1383.50 1383.6 1383.50 H1393.4 Q1395.1 1383.50 1395.1 1381.80 V1380.40 Q1395.0 1378.00 1392.7 1377.40 L1391.0 1377.00 Q1388.5 1379.00 1386.0 1377.00 Z" fill="none" stroke="#3E3446" stroke-width="1.3" stroke-linejoin="round"/>
<path d="M55.60 1420.10 L57.80 1425.38 L63.49 1425.84 L59.15 1429.55 L60.48 1435.11 L55.60 1432.13 L50.72 1435.11 L52.05 1429.55 L47.71 1425.84 L53.40 1425.38 Z" fill="none" stroke="#DBD6E1" stroke-width="1.35" stroke-linejoin="round"/>
<g transform="translate(515.20 1420.00)" fill="none" stroke="#fff" stroke-linecap="round"><path d="M5.2 17.2 C7.8 16.2 9.2 12.2 10.2 8.2 C11.2 4.2 12.8 1.9 15.6 1.9" stroke-width="1.5"/><path d="M10.9 7.3 L15.2 6.7" stroke-width="1.2"/><path d="M9.0 5.9 C7.6 4.7 4.9 5.1 5.0 6.9 C5.1 8.6 8.5 9.0 8.3 11.2 C8.1 13.1 4.8 13.4 3.3 12.1" stroke-width="1.6"/></g>
<circle cx="531.80" cy="1422.90" r="1.25" fill="#fff"/><circle cx="519.90" cy="1436.30" r="1.25" fill="#fff"/><circle cx="517.90" cy="1431.50" r="1.25" fill="#fff"/>
<ellipse cx="1388.5" cy="1427.20" rx="2.9" ry="3.6" fill="none" stroke="#3E3446" stroke-width="1.3"/>
<path d="M1386.0 1430.50 L1384.3 1430.90 Q1382.0 1431.50 1381.9 1433.90 V1435.30 Q1381.9 1437.00 1383.6 1437.00 H1393.4 Q1395.1 1437.00 1395.1 1435.30 V1433.90 Q1395.0 1431.50 1392.7 1430.90 L1391.0 1430.50 Q1388.5 1432.50 1386.0 1430.50 Z" fill="none" stroke="#3E3446" stroke-width="1.3" stroke-linejoin="round"/>
<path d="M55.60 1473.60 L57.80 1478.88 L63.49 1479.34 L59.15 1483.05 L60.48 1488.61 L55.60 1485.63 L50.72 1488.61 L52.05 1483.05 L47.71 1479.34 L53.40 1478.88 Z" fill="none" stroke="#DBD6E1" stroke-width="1.35" stroke-linejoin="round"/>
<g transform="translate(515.20 1473.50)" fill="none" stroke="#fff" stroke-linecap="round"><path d="M5.2 17.2 C7.8 16.2 9.2 12.2 10.2 8.2 C11.2 4.2 12.8 1.9 15.6 1.9" stroke-width="1.5"/><path d="M10.9 7.3 L15.2 6.7" stroke-width="1.2"/><path d="M9.0 5.9 C7.6 4.7 4.9 5.1 5.0 6.9 C5.1 8.6 8.5 9.0 8.3 11.2 C8.1 13.1 4.8 13.4 3.3 12.1" stroke-width="1.6"/></g>
<circle cx="531.80" cy="1476.40" r="1.25" fill="#fff"/><circle cx="519.90" cy="1489.80" r="1.25" fill="#fff"/><circle cx="517.90" cy="1485.00" r="1.25" fill="#fff"/>
<ellipse cx="1388.5" cy="1480.70" rx="2.9" ry="3.6" fill="none" stroke="#3E3446" stroke-width="1.3"/>
<path d="M1386.0 1484.00 L1384.3 1484.40 Q1382.0 1485.00 1381.9 1487.40 V1488.80 Q1381.9 1490.50 1383.6 1490.50 H1393.4 Q1395.1 1490.50 1395.1 1488.80 V1487.40 Q1395.0 1485.00 1392.7 1484.40 L1391.0 1484.00 Q1388.5 1486.00 1386.0 1484.00 Z" fill="none" stroke="#3E3446" stroke-width="1.3" stroke-linejoin="round"/>
<path d="M55.60 1527.10 L57.80 1532.38 L63.49 1532.84 L59.15 1536.55 L60.48 1542.11 L55.60 1539.13 L50.72 1542.11 L52.05 1536.55 L47.71 1532.84 L53.40 1532.38 Z" fill="none" stroke="#DBD6E1" stroke-width="1.35" stroke-linejoin="round"/>
<g transform="translate(515.20 1527.00)" fill="none" stroke="#fff" stroke-linecap="round"><path d="M5.2 17.2 C7.8 16.2 9.2 12.2 10.2 8.2 C11.2 4.2 12.8 1.9 15.6 1.9" stroke-width="1.5"/><path d="M10.9 7.3 L15.2 6.7" stroke-width="1.2"/><path d="M9.0 5.9 C7.6 4.7 4.9 5.1 5.0 6.9 C5.1 8.6 8.5 9.0 8.3 11.2 C8.1 13.1 4.8 13.4 3.3 12.1" stroke-width="1.6"/></g>
<circle cx="531.80" cy="1529.90" r="1.25" fill="#fff"/><circle cx="519.90" cy="1543.30" r="1.25" fill="#fff"/><circle cx="517.90" cy="1538.50" r="1.25" fill="#fff"/>
<ellipse cx="1388.5" cy="1534.20" rx="2.9" ry="3.6" fill="none" stroke="#3E3446" stroke-width="1.3"/>
<path d="M1386.0 1537.50 L1384.3 1537.90 Q1382.0 1538.50 1381.9 1540.90 V1542.30 Q1381.9 1544.00 1383.6 1544.00 H1393.4 Q1395.1 1544.00 1395.1 1542.30 V1540.90 Q1395.0 1538.50 1392.7 1537.90 L1391.0 1537.50 Q1388.5 1539.50 1386.0 1537.50 Z" fill="none" stroke="#3E3446" stroke-width="1.3" stroke-linejoin="round"/>
</svg>
<div class="t" style="left:17.65px;top:12.00px;font-size:33.28px;line-height:37.00px;letter-spacing:-0.198px;color:#2B1D38;font-weight:700;">Performance</div>
<div class="t" style="left:1457.87px;top:20.00px;font-size:17.88px;line-height:20.00px;letter-spacing:0.000px;color:#FFFFFF;font-weight:700;transform:scaleX(0.9695);transform-origin:0.13px 50%;">View Trends</div>
<div class="t" style="left:17.90px;top:87.00px;font-size:19.19px;line-height:21.00px;letter-spacing:0.000px;color:#6C5FC7;font-weight:400;transform:scaleX(0.9467);transform-origin:0.00px 50%;">All Transactions</div>
<div class="t" style="left:165.00px;top:87.00px;font-size:19.19px;line-height:21.00px;letter-spacing:-0.069px;color:#2B1D38;font-weight:400;">Frontend</div>
<div class="t" style="left:259.50px;top:87.00px;font-size:19.19px;line-height:21.00px;letter-spacing:0.000px;color:#2B1D38;font-weight:400;transform:scaleX(0.9686);transform-origin:1.50px 50%;">Backend</div>
<div class="t" style="left:350.10px;top:87.00px;font-size:19.19px;line-height:21.00px;letter-spacing:0.000px;color:#2B1D38;font-weight:400;transform:scaleX(0.9488);transform-origin:1.50px 50%;">Mobile</div>
<div class="t" style="left:66.32px;top:165.00px;font-size:17.01px;line-height:19.00px;letter-spacing:0.233px;color:#2B1D38;font-weight:700;">All Projects</div>
<div class="t" style="left:254.32px;top:165.00px;font-size:17.01px;line-height:19.00px;letter-spacing:-0.146px;color:#2B1D38;font-weight:700;">All Envs</div>
<div class="t" style="left:411.75px;top:165.00px;font-size:17.01px;line-height:19.00px;letter-spacing:0.118px;color:#2B1D38;font-weight:700;">7D</div>
<div class="t" style="left:561.73px;top:165.00px;font-size:17.73px;line-height:20.00px;letter-spacing:0.239px;color:#80708F;font-weight:400;">Search Transactions</div>
<div class="t" style="left:38.25px;top:237.00px;font-size:19.19px;line-height:21.00px;letter-spacing:0.581px;color:#2B1D38;font-weight:700;">Most Regressed (P95)</div>
<div class="t" style="left:39.12px;top:265.00px;font-size:17.30px;line-height:20.00px;letter-spacing:0.422px;color:#80708F;font-weight:400;">Trending Transactions</div>
<div class="t" style="left:826.45px;top:237.00px;font-size:19.19px;line-height:21.00px;letter-spacing:0.657px;color:#2B1D38;font-weight:700;">Most Improved (P95)</div>
<div class="t" style="left:827.32px;top:265.00px;font-size:17.30px;line-height:20.00px;letter-spacing:0.442px;color:#80708F;font-weight:400;">Trending Transactions</div>
<div class="t" style="left:637.47px;top:249.00px;font-size:18.02px;line-height:20.00px;letter-spacing:0.000px;color:#2B1D38;font-weight:700;transform:scaleX(0.9534);transform-origin:0.13px 50%;">View All</div>
<div class="t" style="left:1426.47px;top:249.00px;font-size:18.02px;line-height:20.00px;letter-spacing:0.000px;color:#2B1D38;font-weight:700;transform:scaleX(0.9534);transform-origin:0.13px 50%;">View All</div>
<div class="t" style="left:331.48px;top:461.00px;font-size:16.86px;line-height:19.00px;letter-spacing:0.443px;color:#80708F;font-weight:700;">No results found</div>
<div class="t" style="left:237.32px;top:494.00px;font-size:15.41px;line-height:17.00px;letter-spacing:0.154px;color:#80708F;font-weight:400;">Transactions may not be listed due to the filters</div>
<div class="t" style="left:302.37px;top:512.00px;font-size:15.41px;line-height:17.00px;letter-spacing:0.057px;color:#80708F;font-weight:400;">above or a low sampling rate</div>
<div class="t" style="left:877.43px;top:428.00px;font-size:15.12px;line-height:17.00px;letter-spacing:0.900px;color:#80708F;font-weight:400;">0</div>
<div class="t" style="left:836.85px;top:408.00px;font-size:15.12px;line-height:17.00px;letter-spacing:0.900px;color:#80708F;font-weight:400;">500ms</div>
<div class="t" style="left:827.58px;top:389.00px;font-size:15.12px;line-height:17.00px;letter-spacing:0.900px;color:#80708F;font-weight:400;">1000ms</div>
<div class="t" style="left:827.58px;top:369.00px;font-size:15.12px;line-height:17.00px;letter-spacing:0.900px;color:#80708F;font-weight:400;">1500ms</div>
<div class="t" style="left:827.58px;top:349.00px;font-size:15.12px;line-height:17.00px;letter-spacing:0.900px;color:#80708F;font-weight:400;">2000ms</div>
<div class="t" style="left:827.58px;top:330.00px;font-size:15.12px;line-height:17.00px;letter-spacing:0.900px;color:#80708F;font-weight:400;">2500ms</div>
<div class="t" style="left:827.58px;top:310.00px;font-size:15.12px;line-height:17.00px;letter-spacing:0.900px;color:#80708F;font-weight:400;">3000ms</div>
<div class="t" style="left:901.38px;top:392.00px;font-size:14.10px;line-height:16.00px;letter-spacing:-0.192px;color:#2B1D38;font-weight:400;">Past</div>
<div class="t" style="left:1498.88px;top:438.00px;font-size:14.10px;line-height:16.00px;letter-spacing:-0.069px;color:#2B1D38;font-weight:400;">Present</div>
<div class="t" style="left:1457.42px;top:491.00px;font-size:17.88px;line-height:20.00px;letter-spacing:0.000px;color:#80708F;font-weight:400;">95.6ms</div>
<div class="t" style="left:1388.96px;top:491.00px;font-size:17.88px;line-height:20.00px;letter-spacing:0.000px;color:#80708F;font-weight:400;">1.3s</div>
<div class="t" style="left:1457.42px;top:542.00px;font-size:17.88px;line-height:20.00px;letter-spacing:0.000px;color:#80708F;font-weight:400;">83.7ms</div>
<div class="t" style="left:1388.84px;top:542.00px;font-size:17.88px;line-height:20.00px;letter-spacing:0.000px;color:#80708F;font-weight:400;">1.0s</div>
<div class="t" style="left:1472.29px;top:593.00px;font-size:17.88px;line-height:20.00px;letter-spacing:0.000px;color:#80708F;font-weight:400;">89ms</div>
<div class="t" style="left:1383.83px;top:593.00px;font-size:17.88px;line-height:20.00px;letter-spacing:0.000px;color:#80708F;font-weight:400;">999ms</div>
<div class="t" style="left:1447.41px;top:644.00px;font-size:17.88px;line-height:20.00px;letter-spacing:0.000px;color:#80708F;font-weight:400;">207.0ms</div>
<div class="t" style="left:1378.96px;top:644.00px;font-size:17.88px;line-height:20.00px;letter-spacing:0.000px;color:#80708F;font-weight:400;">1.7s</div>
<div class="t" style="left:38.37px;top:719.00px;font-size:19.19px;line-height:21.00px;letter-spacing:0.333px;color:#2B1D38;font-weight:700;">User Misery</div>
<div class="t" style="left:38.62px;top:747.00px;font-size:17.30px;line-height:20.00px;letter-spacing:0.384px;color:#80708F;font-weight:400;">Compared to last 7d</div>
<div class="t" style="left:396.03px;top:726.00px;font-size:22.09px;line-height:25.00px;letter-spacing:1.101px;color:#444674;font-weight:400;">0.692</div>
<div class="t" style="left:564.35px;top:719.00px;font-size:19.19px;line-height:21.00px;letter-spacing:0.540px;color:#2B1D38;font-weight:700;">Transactions Per Minute</div>
<div class="t" style="left:563.72px;top:747.00px;font-size:17.30px;line-height:20.00px;letter-spacing:0.384px;color:#80708F;font-weight:400;">Compared to last 7d</div>
<div class="t" style="left:924.08px;top:726.00px;font-size:22.09px;line-height:25.00px;letter-spacing:0.538px;color:#7A5088;font-weight:400;">65.67</div>
<div class="t" style="left:1089.05px;top:719.00px;font-size:19.19px;line-height:21.00px;letter-spacing:0.576px;color:#2B1D38;font-weight:700;">Failure Rate</div>
<div class="t" style="left:1089.42px;top:747.00px;font-size:17.30px;line-height:20.00px;letter-spacing:0.384px;color:#80708F;font-weight:400;">Compared to last 7d</div>
<div class="t" style="left:1475.13px;top:726.00px;font-size:22.09px;line-height:25.00px;letter-spacing:0.000px;color:#B84A86;font-weight:400;transform:scaleX(0.9766);transform-origin:0.87px 50%;">0%</div>
<div class="t" style="left:40.08px;top:783.00px;font-size:15.12px;line-height:17.00px;letter-spacing:0.000px;color:#80708F;font-weight:400;">1</div>
<div class="t" style="left:39.43px;top:862.00px;font-size:15.12px;line-height:17.00px;letter-spacing:0.000px;color:#80708F;font-weight:400;">0</div>
<div class="t" style="left:584.13px;top:862.00px;font-size:15.12px;line-height:17.00px;letter-spacing:1.200px;color:#80708F;font-weight:400;">0</div>
<div class="t" style="left:564.86px;top:846.00px;font-size:15.12px;line-height:17.00px;letter-spacing:1.200px;color:#80708F;font-weight:400;">100</div>
<div class="t" style="left:564.86px;top:830.00px;font-size:15.12px;line-height:17.00px;letter-spacing:1.200px;color:#80708F;font-weight:400;">200</div>
<div class="t" style="left:564.86px;top:815.00px;font-size:15.12px;line-height:17.00px;letter-spacing:1.200px;color:#80708F;font-weight:400;">300</div>
<div class="t" style="left:564.86px;top:799.00px;font-size:15.12px;line-height:17.00px;letter-spacing:1.200px;color:#80708F;font-weight:400;">400</div>
<div class="t" style="left:564.86px;top:783.00px;font-size:15.12px;line-height:17.00px;letter-spacing:1.200px;color:#80708F;font-weight:400;">500</div>
<div class="t" style="left:1088.40px;top:783.00px;font-size:15.12px;line-height:17.00px;letter-spacing:0.000px;color:#80708F;font-weight:400;">100%</div>
<div class="t" style="left:1105.26px;top:862.00px;font-size:15.12px;line-height:17.00px;letter-spacing:0.000px;color:#80708F;font-weight:400;">0%</div>
<div class="t" style="left:90.28px;top:936.00px;font-size:15.70px;line-height:17.00px;letter-spacing:0.000px;color:#80708F;font-weight:700;transform:scaleX(0.9105);transform-origin:0.12px 50%;">TRANSACTION</div>
<div class="t" style="left:514.90px;top:936.00px;font-size:15.70px;line-height:17.00px;letter-spacing:0.000px;color:#80708F;font-weight:700;transform:scaleX(0.9314);transform-origin:1.00px 50%;">PROJECT</div>
<div class="t" style="left:729.18px;top:936.00px;font-size:15.70px;line-height:17.00px;letter-spacing:0.000px;color:#80708F;font-weight:700;transform:scaleX(0.9495);transform-origin:0.12px 50%;">TPM</div>
<div class="t" style="left:871.00px;top:936.00px;font-size:15.70px;line-height:17.00px;letter-spacing:1.556px;color:#80708F;font-weight:700;">P50</div>
<div class="t" style="left:995.10px;top:936.00px;font-size:15.70px;line-height:17.00px;letter-spacing:0.782px;color:#80708F;font-weight:700;">P95</div>
<div class="t" style="left:1065.90px;top:936.00px;font-size:15.70px;line-height:17.00px;letter-spacing:0.000px;color:#80708F;font-weight:700;transform:scaleX(0.9157);transform-origin:1.00px 50%;">FAILURE RATE</div>
<div class="t" style="left:1231.43px;top:936.00px;font-size:15.70px;line-height:17.00px;letter-spacing:0.000px;color:#80708F;font-weight:700;transform:scaleX(0.9315);transform-origin:0.37px 50%;">APDEX</div>
<div class="t" style="left:1344.33px;top:936.00px;font-size:15.70px;line-height:17.00px;letter-spacing:0.000px;color:#80708F;font-weight:700;transform:scaleX(0.9282);transform-origin:0.87px 50%;">USERS</div>
<div class="t" style="left:1436.03px;top:936.00px;font-size:15.70px;line-height:17.00px;letter-spacing:0.000px;color:#80708F;font-weight:700;transform:scaleX(0.9183);transform-origin:0.87px 50%;">USER MISERY</div>
<div class="t" style="left:705.17px;top:990.00px;font-size:17.44px;line-height:20.00px;letter-spacing:1.050px;color:#2B1D38;font-weight:400;">58.3/min</div>
<div class="t" style="left:818.45px;top:990.00px;font-size:17.44px;line-height:20.00px;letter-spacing:1.050px;color:#2B1D38;font-weight:400;">248.00ms</div>
<div class="t" style="left:979.86px;top:990.00px;font-size:17.44px;line-height:20.00px;letter-spacing:1.050px;color:#2B1D38;font-weight:400;">1.11s</div>
<div class="t" style="left:1144.43px;top:990.00px;font-size:17.44px;line-height:20.00px;letter-spacing:0.300px;color:#2B1D38;font-weight:400;">0%</div>
<div class="t" style="left:1223.98px;top:990.00px;font-size:17.44px;line-height:20.00px;letter-spacing:1.050px;color:#2B1D38;font-weight:400;">0.8066</div>
<div class="t" style="left:1360.03px;top:990.00px;font-size:17.44px;line-height:20.00px;letter-spacing:1.050px;color:#2B1D38;font-weight:400;">0</div>
<div class="t" style="left:705.17px;top:1043.00px;font-size:17.44px;line-height:20.00px;letter-spacing:1.050px;color:#2B1D38;font-weight:400;">2.94/min</div>
<div class="t" style="left:818.45px;top:1043.00px;font-size:17.44px;line-height:20.00px;letter-spacing:1.050px;color:#2B1D38;font-weight:400;">259.00ms</div>
<div class="t" style="left:978.61px;top:1043.00px;font-size:17.44px;line-height:20.00px;letter-spacing:1.050px;color:#2B1D38;font-weight:400;">1.10s</div>
<div class="t" style="left:1144.43px;top:1043.00px;font-size:17.44px;line-height:20.00px;letter-spacing:0.300px;color:#2B1D38;font-weight:400;">0%</div>
<div class="t" style="left:1224.10px;top:1043.00px;font-size:17.44px;line-height:20.00px;letter-spacing:1.050px;color:#2B1D38;font-weight:400;">0.8081</div>
<div class="t" style="left:1360.03px;top:1043.00px;font-size:17.44px;line-height:20.00px;letter-spacing:1.050px;color:#2B1D38;font-weight:400;">0</div>
<div class="t" style="left:705.17px;top:1097.00px;font-size:17.44px;line-height:20.00px;letter-spacing:1.050px;color:#2B1D38;font-weight:400;">1.81/min</div>
<div class="t" style="left:818.45px;top:1097.00px;font-size:17.44px;line-height:20.00px;letter-spacing:1.050px;color:#2B1D38;font-weight:400;">166.00ms</div>
<div class="t" style="left:941.45px;top:1097.00px;font-size:17.44px;line-height:20.00px;letter-spacing:1.050px;color:#2B1D38;font-weight:400;">752.00ms</div>
<div class="t" style="left:1144.43px;top:1097.00px;font-size:17.44px;line-height:20.00px;letter-spacing:0.300px;color:#2B1D38;font-weight:400;">0%</div>
<div class="t" style="left:1223.98px;top:1097.00px;font-size:17.44px;line-height:20.00px;letter-spacing:1.050px;color:#2B1D38;font-weight:400;">0.8945</div>
<div class="t" style="left:1360.03px;top:1097.00px;font-size:17.44px;line-height:20.00px;letter-spacing:1.050px;color:#2B1D38;font-weight:400;">0</div>
<div class="t" style="left:694.40px;top:1150.00px;font-size:17.44px;line-height:20.00px;letter-spacing:1.050px;color:#2B1D38;font-weight:400;">0.419/min</div>
<div class="t" style="left:855.61px;top:1150.00px;font-size:17.44px;line-height:20.00px;letter-spacing:1.050px;color:#2B1D38;font-weight:400;">1.43s</div>
<div class="t" style="left:978.61px;top:1150.00px;font-size:17.44px;line-height:20.00px;letter-spacing:1.050px;color:#2B1D38;font-weight:400;">5.25s</div>
<div class="t" style="left:1119.36px;top:1150.00px;font-size:17.44px;line-height:20.00px;letter-spacing:0.300px;color:#2B1D38;font-weight:400;">0.28%</div>
<div class="t" style="left:1272.83px;top:1150.00px;font-size:17.44px;line-height:20.00px;letter-spacing:1.050px;color:#2B1D38;font-weight:400;">0</div>
<div class="t" style="left:1360.03px;top:1150.00px;font-size:17.44px;line-height:20.00px;letter-spacing:1.050px;color:#2B1D38;font-weight:400;">0</div>
<div class="t" style="left:694.40px;top:1204.00px;font-size:17.44px;line-height:20.00px;letter-spacing:1.050px;color:#2B1D38;font-weight:400;">0.327/min</div>
<div class="t" style="left:818.45px;top:1204.00px;font-size:17.44px;line-height:20.00px;letter-spacing:1.050px;color:#2B1D38;font-weight:400;">222.00ms</div>
<div class="t" style="left:978.61px;top:1204.00px;font-size:17.44px;line-height:20.00px;letter-spacing:1.050px;color:#2B1D38;font-weight:400;">1.07s</div>
<div class="t" style="left:1144.43px;top:1204.00px;font-size:17.44px;line-height:20.00px;letter-spacing:0.300px;color:#2B1D38;font-weight:400;">0%</div>
<div class="t" style="left:1224.10px;top:1204.00px;font-size:17.44px;line-height:20.00px;letter-spacing:1.050px;color:#2B1D38;font-weight:400;">0.8301</div>
<div class="t" style="left:1360.03px;top:1204.00px;font-size:17.44px;line-height:20.00px;letter-spacing:1.050px;color:#2B1D38;font-weight:400;">0</div>
<div class="t" style="left:694.40px;top:1257.00px;font-size:17.44px;line-height:20.00px;letter-spacing:1.050px;color:#2B1D38;font-weight:400;">0.273/min</div>
<div class="t" style="left:855.61px;top:1257.00px;font-size:17.44px;line-height:20.00px;letter-spacing:1.050px;color:#2B1D38;font-weight:400;">1.43s</div>
<div class="t" style="left:978.61px;top:1257.00px;font-size:17.44px;line-height:20.00px;letter-spacing:1.050px;color:#2B1D38;font-weight:400;">5.20s</div>
<div class="t" style="left:1144.43px;top:1257.00px;font-size:17.44px;line-height:20.00px;letter-spacing:0.300px;color:#2B1D38;font-weight:400;">0%</div>
<div class="t" style="left:1223.98px;top:1257.00px;font-size:17.44px;line-height:20.00px;letter-spacing:1.050px;color:#2B1D38;font-weight:400;">0.2568</div>
<div class="t" style="left:1339.99px;top:1257.00px;font-size:17.44px;line-height:20.00px;letter-spacing:1.050px;color:#2B1D38;font-weight:400;">211</div>
<div class="t" style="left:694.40px;top:1311.00px;font-size:17.44px;line-height:20.00px;letter-spacing:1.050px;color:#2B1D38;font-weight:400;">0.149/min</div>
<div class="t" style="left:818.45px;top:1311.00px;font-size:17.44px;line-height:20.00px;letter-spacing:1.050px;color:#2B1D38;font-weight:400;">105.50ms</div>
<div class="t" style="left:978.61px;top:1311.00px;font-size:17.44px;line-height:20.00px;letter-spacing:1.050px;color:#2B1D38;font-weight:400;">1.13s</div>
<div class="t" style="left:1144.43px;top:1311.00px;font-size:17.44px;line-height:20.00px;letter-spacing:0.300px;color:#2B1D38;font-weight:400;">0%</div>
<div class="t" style="left:1223.98px;top:1311.00px;font-size:17.44px;line-height:20.00px;letter-spacing:1.050px;color:#2B1D38;font-weight:400;">0.8205</div>
<div class="t" style="left:1360.03px;top:1311.00px;font-size:17.44px;line-height:20.00px;letter-spacing:1.050px;color:#2B1D38;font-weight:400;">0</div>
<div class="t" style="left:694.40px;top:1364.00px;font-size:17.44px;line-height:20.00px;letter-spacing:1.050px;color:#2B1D38;font-weight:400;">0.109/min</div>
<div class="t" style="left:818.45px;top:1364.00px;font-size:17.44px;line-height:20.00px;letter-spacing:1.050px;color:#2B1D38;font-weight:400;">129.00ms</div>
<div class="t" style="left:941.45px;top:1364.00px;font-size:17.44px;line-height:20.00px;letter-spacing:1.050px;color:#2B1D38;font-weight:400;">722.00ms</div>
<div class="t" style="left:1144.43px;top:1364.00px;font-size:17.44px;line-height:20.00px;letter-spacing:0.300px;color:#2B1D38;font-weight:400;">0%</div>
<div class="t" style="left:1223.98px;top:1364.00px;font-size:17.44px;line-height:20.00px;letter-spacing:1.050px;color:#2B1D38;font-weight:400;">0.8996</div>
<div class="t" style="left:1360.03px;top:1364.00px;font-size:17.44px;line-height:20.00px;letter-spacing:1.050px;color:#2B1D38;font-weight:400;">0</div>
<div class="t" style="left:683.63px;top:1418.00px;font-size:17.44px;line-height:20.00px;letter-spacing:1.050px;color:#2B1D38;font-weight:400;">0.0801/min</div>
<div class="t" style="left:818.45px;top:1418.00px;font-size:17.44px;line-height:20.00px;letter-spacing:1.050px;color:#2B1D38;font-weight:400;">345.00ms</div>
<div class="t" style="left:978.61px;top:1418.00px;font-size:17.44px;line-height:20.00px;letter-spacing:1.050px;color:#2B1D38;font-weight:400;">1.47s</div>
<div class="t" style="left:1144.43px;top:1418.00px;font-size:17.44px;line-height:20.00px;letter-spacing:0.300px;color:#2B1D38;font-weight:400;">0%</div>
<div class="t" style="left:1223.73px;top:1418.00px;font-size:17.44px;line-height:20.00px;letter-spacing:1.050px;color:#2B1D38;font-weight:400;">0.6294</div>
<div class="t" style="left:1360.03px;top:1418.00px;font-size:17.44px;line-height:20.00px;letter-spacing:1.050px;color:#2B1D38;font-weight:400;">0</div>
<div class="t" style="left:683.63px;top:1471.00px;font-size:17.44px;line-height:20.00px;letter-spacing:1.050px;color:#2B1D38;font-weight:400;">0.0729/min</div>
<div class="t" style="left:818.45px;top:1471.00px;font-size:17.44px;line-height:20.00px;letter-spacing:1.050px;color:#2B1D38;font-weight:400;">532.00ms</div>
<div class="t" style="left:978.61px;top:1471.00px;font-size:17.44px;line-height:20.00px;letter-spacing:1.050px;color:#2B1D38;font-weight:400;">2.56s</div>
<div class="t" style="left:1119.36px;top:1471.00px;font-size:17.44px;line-height:20.00px;letter-spacing:0.300px;color:#2B1D38;font-weight:400;">0.41%</div>
<div class="t" style="left:1223.98px;top:1471.00px;font-size:17.44px;line-height:20.00px;letter-spacing:1.050px;color:#2B1D38;font-weight:400;">0.5775</div>
<div class="t" style="left:1360.03px;top:1471.00px;font-size:17.44px;line-height:20.00px;letter-spacing:1.050px;color:#2B1D38;font-weight:400;">0</div>
<div class="t" style="left:683.63px;top:1525.00px;font-size:17.44px;line-height:20.00px;letter-spacing:1.050px;color:#2B1D38;font-weight:400;">0.0722/min</div>
<div class="t" style="left:818.45px;top:1525.00px;font-size:17.44px;line-height:20.00px;letter-spacing:1.050px;color:#2B1D38;font-weight:400;">252.00ms</div>
<div class="t" style="left:978.61px;top:1525.00px;font-size:17.44px;line-height:20.00px;letter-spacing:1.050px;color:#2B1D38;font-weight:400;">1.05s</div>
<div class="t" style="left:1144.43px;top:1525.00px;font-size:17.44px;line-height:20.00px;letter-spacing:0.300px;color:#2B1D38;font-weight:400;">0%</div>
<div class="t" style="left:1223.98px;top:1525.00px;font-size:17.44px;line-height:20.00px;letter-spacing:1.050px;color:#2B1D38;font-weight:400;">0.7898</div>
<div class="t" style="left:1360.03px;top:1525.00px;font-size:17.44px;line-height:20.00px;letter-spacing:1.050px;color:#2B1D38;font-weight:400;">0</div>
</div></body></html>
